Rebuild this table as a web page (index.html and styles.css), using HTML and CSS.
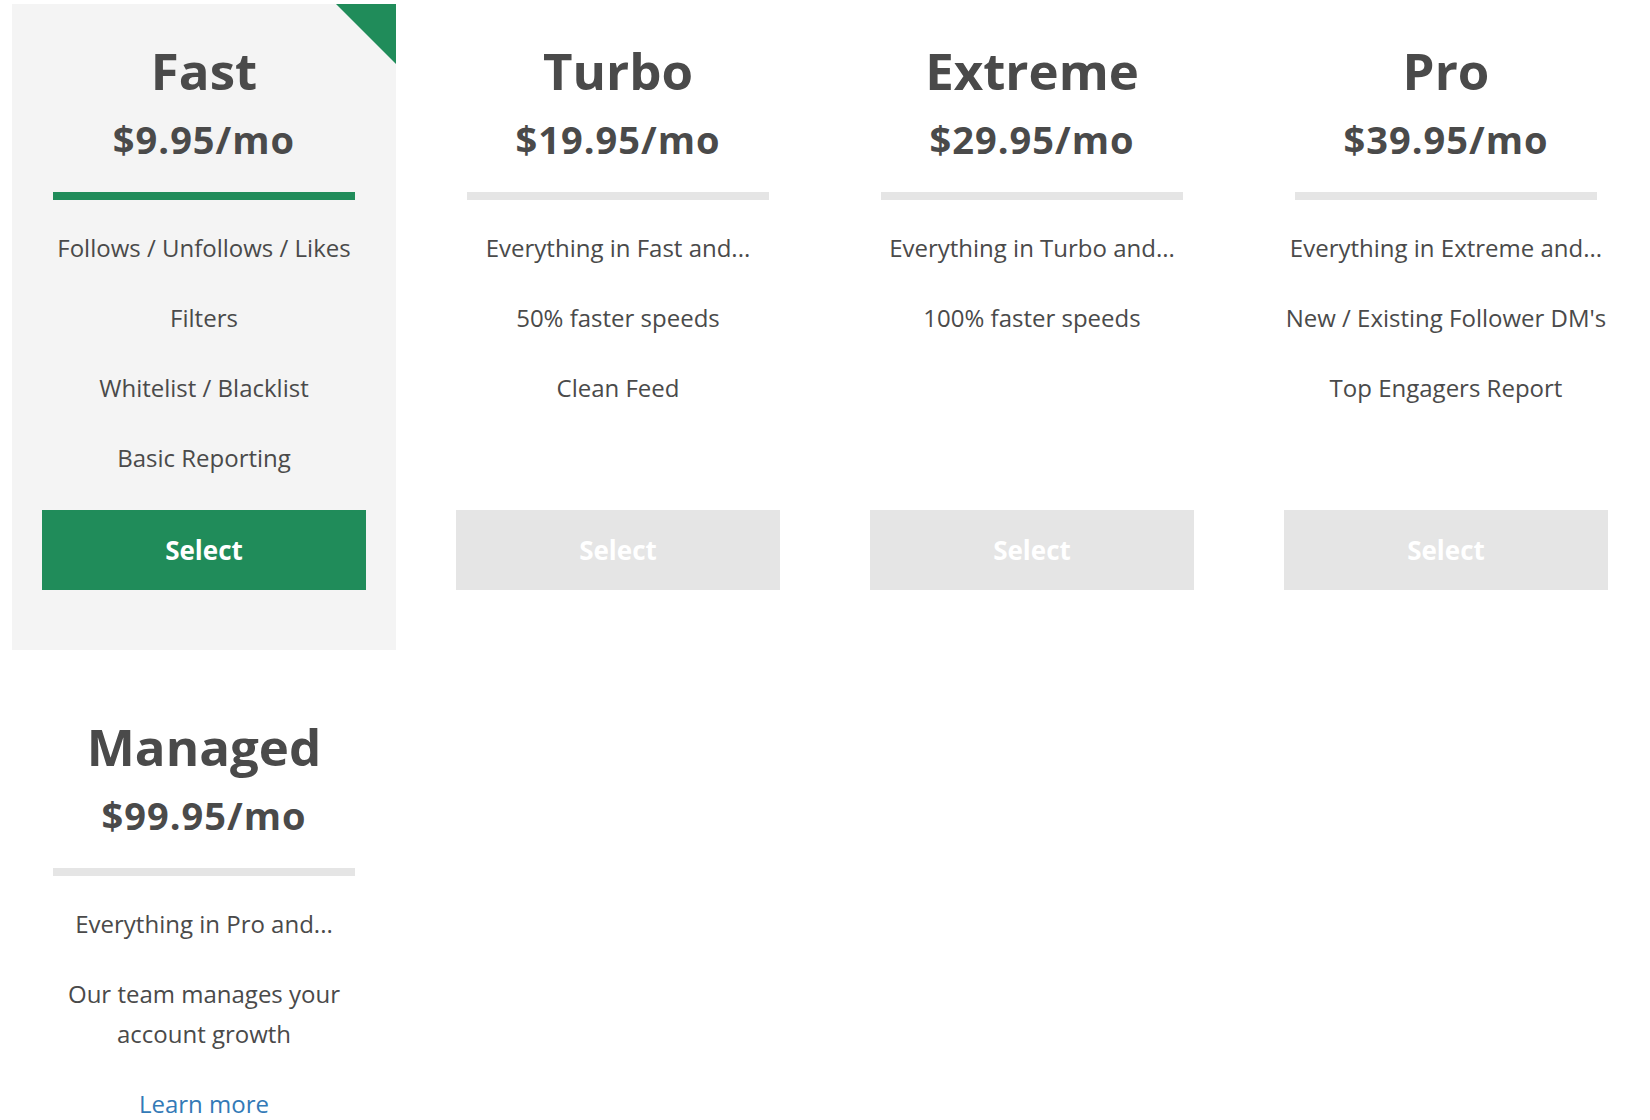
FILE: index.html
```html
<!DOCTYPE html>
<html>
<head>
<meta charset="utf-8">
<link rel="stylesheet" href="styles.css">
</head>
<body>
<div class="plans">
  <div class="plan plan--active">
    <span class="corner"></span>
    <h2 class="plan-name">Fast</h2>
    <div class="plan-price">$9.95/mo</div>
    <div class="plan-rule"></div>
    <ul class="features">
      <li>Follows / Unfollows / Likes</li>
      <li>Filters</li>
      <li>Whitelist / Blacklist</li>
      <li>Basic Reporting</li>
    </ul>
    <a class="select-btn">Select</a>
  </div>
  <div class="plan">
    <h2 class="plan-name">Turbo</h2>
    <div class="plan-price">$19.95/mo</div>
    <div class="plan-rule"></div>
    <ul class="features">
      <li>Everything in Fast and...</li>
      <li>50% faster speeds</li>
      <li>Clean Feed</li>
    </ul>
    <a class="select-btn">Select</a>
  </div>
  <div class="plan">
    <h2 class="plan-name">Extreme</h2>
    <div class="plan-price">$29.95/mo</div>
    <div class="plan-rule"></div>
    <ul class="features">
      <li>Everything in Turbo and...</li>
      <li>100% faster speeds</li>
    </ul>
    <a class="select-btn">Select</a>
  </div>
  <div class="plan">
    <h2 class="plan-name">Pro</h2>
    <div class="plan-price">$39.95/mo</div>
    <div class="plan-rule"></div>
    <ul class="features">
      <li>Everything in Extreme and...</li>
      <li>New / Existing Follower DM's</li>
      <li>Top Engagers Report</li>
    </ul>
    <a class="select-btn">Select</a>
  </div>
  <div class="plan">
    <h2 class="plan-name">Managed</h2>
    <div class="plan-price">$99.95/mo</div>
    <div class="plan-rule"></div>
    <ul class="features">
      <li>Everything in Pro and...</li>
      <li>Our team manages your account growth</li>
      <li><a class="learn-more">Learn more</a></li>
    </ul>
  </div>
</div>
</body>
</html>
```

FILE: styles.css
```css
html, body {
  margin: 0;
  padding: 0;
  background: #ffffff;
}
body {
  font-family: "Open Sans", "Liberation Sans", sans-serif;
  color: #4a4a4a;
}
.plans {
  display: grid;
  grid-template-columns: repeat(4, 384px);
  column-gap: 30px;
  row-gap: 30px;
  padding: 4px 12px 0 12px;
}
.plan {
  position: relative;
  display: flex;
  flex-direction: column;
  align-items: center;
  padding: 34px 30px 60px 30px;
  text-align: center;
  overflow: hidden;
}
.plan--active {
  background: #f4f4f4;
}
.corner {
  position: absolute;
  top: 0;
  right: 0;
  width: 0;
  height: 0;
  border-top: 60px solid #208c5a;
  border-left: 60px solid transparent;
}
.plan-name {
  margin: 0;
  font-size: 51px;
  line-height: 64px;
  font-weight: 700;
  color: #4a4a4a;
}
.plan-price {
  margin-top: 13px;
  font-size: 38px;
  line-height: 48px;
  font-weight: 700;
  letter-spacing: 1px;
}
.plan-rule {
  margin-top: 29px;
  width: 302px;
  height: 8px;
  background: #e5e5e5;
}
.plan--active .plan-rule {
  background: #208c5a;
}
.features {
  list-style: none;
  margin: 28px 0 32px 0;
  padding: 0;
  font-size: 24px;
  line-height: 40px;
}
.features li {
  margin-bottom: 30px;
}
.features li:last-child {
  margin-bottom: 0;
}
.select-btn {
  display: flex;
  align-items: center;
  justify-content: center;
  align-self: stretch;
  margin-top: auto;
  height: 80px;
  background: #e5e5e5;
  color: #ffffff;
  font-size: 26px;
  font-weight: 700;
}
.plan--active .select-btn {
  background: #208c5a;
}
.learn-more {
  color: #337ab7;
}
```
